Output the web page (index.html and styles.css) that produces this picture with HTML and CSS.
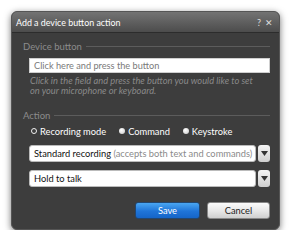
FILE: index.html
```html
<!DOCTYPE html>
<html>
<head>
<meta charset="utf-8">
<link rel="stylesheet" href="styles.css">
</head>
<body>
<div class="dialog">
  <div class="titlebar">
    <span class="title">Add a device button action</span>
    <span class="tools"><span class="help">?</span><span class="close">✕</span></span>
  </div>
  <div class="content">
    <div class="legend"><span>Device button</span><i></i></div>
    <div class="input">Click here and press the button</div>
    <p class="hint">Click in the field and press the button you would like to set<br>on your microphone or keyboard.</p>
    <div class="legend legend-action"><span>Action</span><i></i></div>
    <div class="radios">
      <label class="radio"><b class="dot on"></b>Recording mode</label>
      <label class="radio"><b class="dot"></b>Command</label>
      <label class="radio"><b class="dot"></b>Keystroke</label>
    </div>
    <div class="select">
      <div class="field">Standard recording <span class="muted">(accepts both text and commands)</span></div>
      <div class="arrow"><svg width="7" height="5" viewBox="0 0 7 5"><path d="M0 0H7L3.5 5Z" fill="#333"/></svg></div>
    </div>
    <div class="select">
      <div class="field">Hold to talk</div>
      <div class="arrow"><svg width="7" height="5" viewBox="0 0 7 5"><path d="M0 0H7L3.5 5Z" fill="#333"/></svg></div>
    </div>
    <div class="buttons">
      <button class="btn save">Save</button>
      <button class="btn cancel">Cancel</button>
    </div>
  </div>
</div>
</body>
</html>
```
FILE: styles.css
```css
html, body {
  margin: 0;
  padding: 0;
  background: #ffffff;
}
body {
  font-family: Lato, "Liberation Sans", sans-serif;
  font-size: 9.3px;
}
.dialog {
  margin: 11px 0 0 11px;
  width: 269px;
  height: 219px;
  box-sizing: border-box;
  border-radius: 6px;
  background: #3d3d3d;
  border: 1px solid #555;
  box-shadow: 0 2px 7px rgba(0,0,0,0.55);
  overflow: hidden;
  display: flex;
  flex-direction: column;
}
.titlebar {
  height: 20px;
  flex: none;
  display: flex;
  align-items: center;
  justify-content: space-between;
  padding: 0 6px 0 4px;
  background: linear-gradient(#737373, #4c4c4c);
  border-bottom: 1px solid #2c2c2c;
  color: #fff;
}
.title {
  font-size: 8.9px;
}
.tools {
  display: flex;
  gap: 4px;
  color: #ddd;
  font-size: 9px;
}
.content {
  padding: 6px 9px 0 17px;
  display: flex;
  flex-direction: column;
}
.legend {
  display: flex;
  align-items: center;
  gap: 4px;
  margin-left: -6px;
  color: #8c8c8c;
  font-size: 9.5px;
  height: 14px;
}
.legend i {
  flex: 1;
  height: 0;
  border-top: 1px solid #5c5c5c;
}
.input {
  margin-top: 5px;
  height: 15px;
  box-sizing: border-box;
  background: #fff;
  border: 1px solid #cfcfcf;
  color: #7a7a7a;
  padding: 1px 4px 0;
  line-height: 12px;
  font-size: 9.2px;
}
.hint {
  margin: 3px 0 0 1px;
  color: #8a8a8a;
  font-style: italic;
  font-size: 9.3px;
  line-height: 10px;
  white-space: nowrap;
}
.legend-action {
  margin-top: 12px;
}
.radios {
  display: flex;
  margin-top: 2px;
  height: 14px;
  align-items: center;
  color: #fff;
  gap: 13px;
  padding-left: 2px;
}
.radio {
  display: flex;
  align-items: center;
  gap: 3px;
}
.dot {
  width: 6px;
  height: 6px;
  border-radius: 50%;
  background: radial-gradient(circle at 40% 35%, #ffffff, #c8c8c8);
}
.dot.on {
  box-sizing: border-box;
  background: #3d3d3d;
  border: 1.5px solid #f0f0f0;
}
.select {
  margin-top: 7px;
  display: flex;
  gap: 2px;
  height: 17px;
}
.select + .select {
  margin-top: 8px;
}
.field {
  flex: 1;
  background: #fff;
  border-radius: 3px;
  border: 1px solid #bbb;
  color: #111;
  line-height: 15px;
  padding: 0 4px;
  white-space: nowrap;
  overflow: hidden;
}
.muted {
  color: #8a8a8a;
}
.arrow {
  width: 12px;
  border-radius: 3px;
  background: linear-gradient(#f4f4f4, #cfcfcf);
  display: flex;
  align-items: center;
  justify-content: center;
}
.buttons {
  display: flex;
  justify-content: flex-end;
  gap: 7px;
  margin-top: 15px;
}
.btn {
  height: 17px;
  border-radius: 3px;
  font-family: inherit;
  font-size: 9.3px;
  padding: 0;
}
.save {
  width: 65px;
  color: #fff;
  background: linear-gradient(#49a6f2, #1f74d8 55%, #1565c8);
  border: 1px solid #23466f;
}
.cancel {
  width: 63px;
  color: #222;
  background: linear-gradient(#fbfbfb, #e6e6e6 55%, #cfcfcf);
  border: 1px solid #888;
}
```
